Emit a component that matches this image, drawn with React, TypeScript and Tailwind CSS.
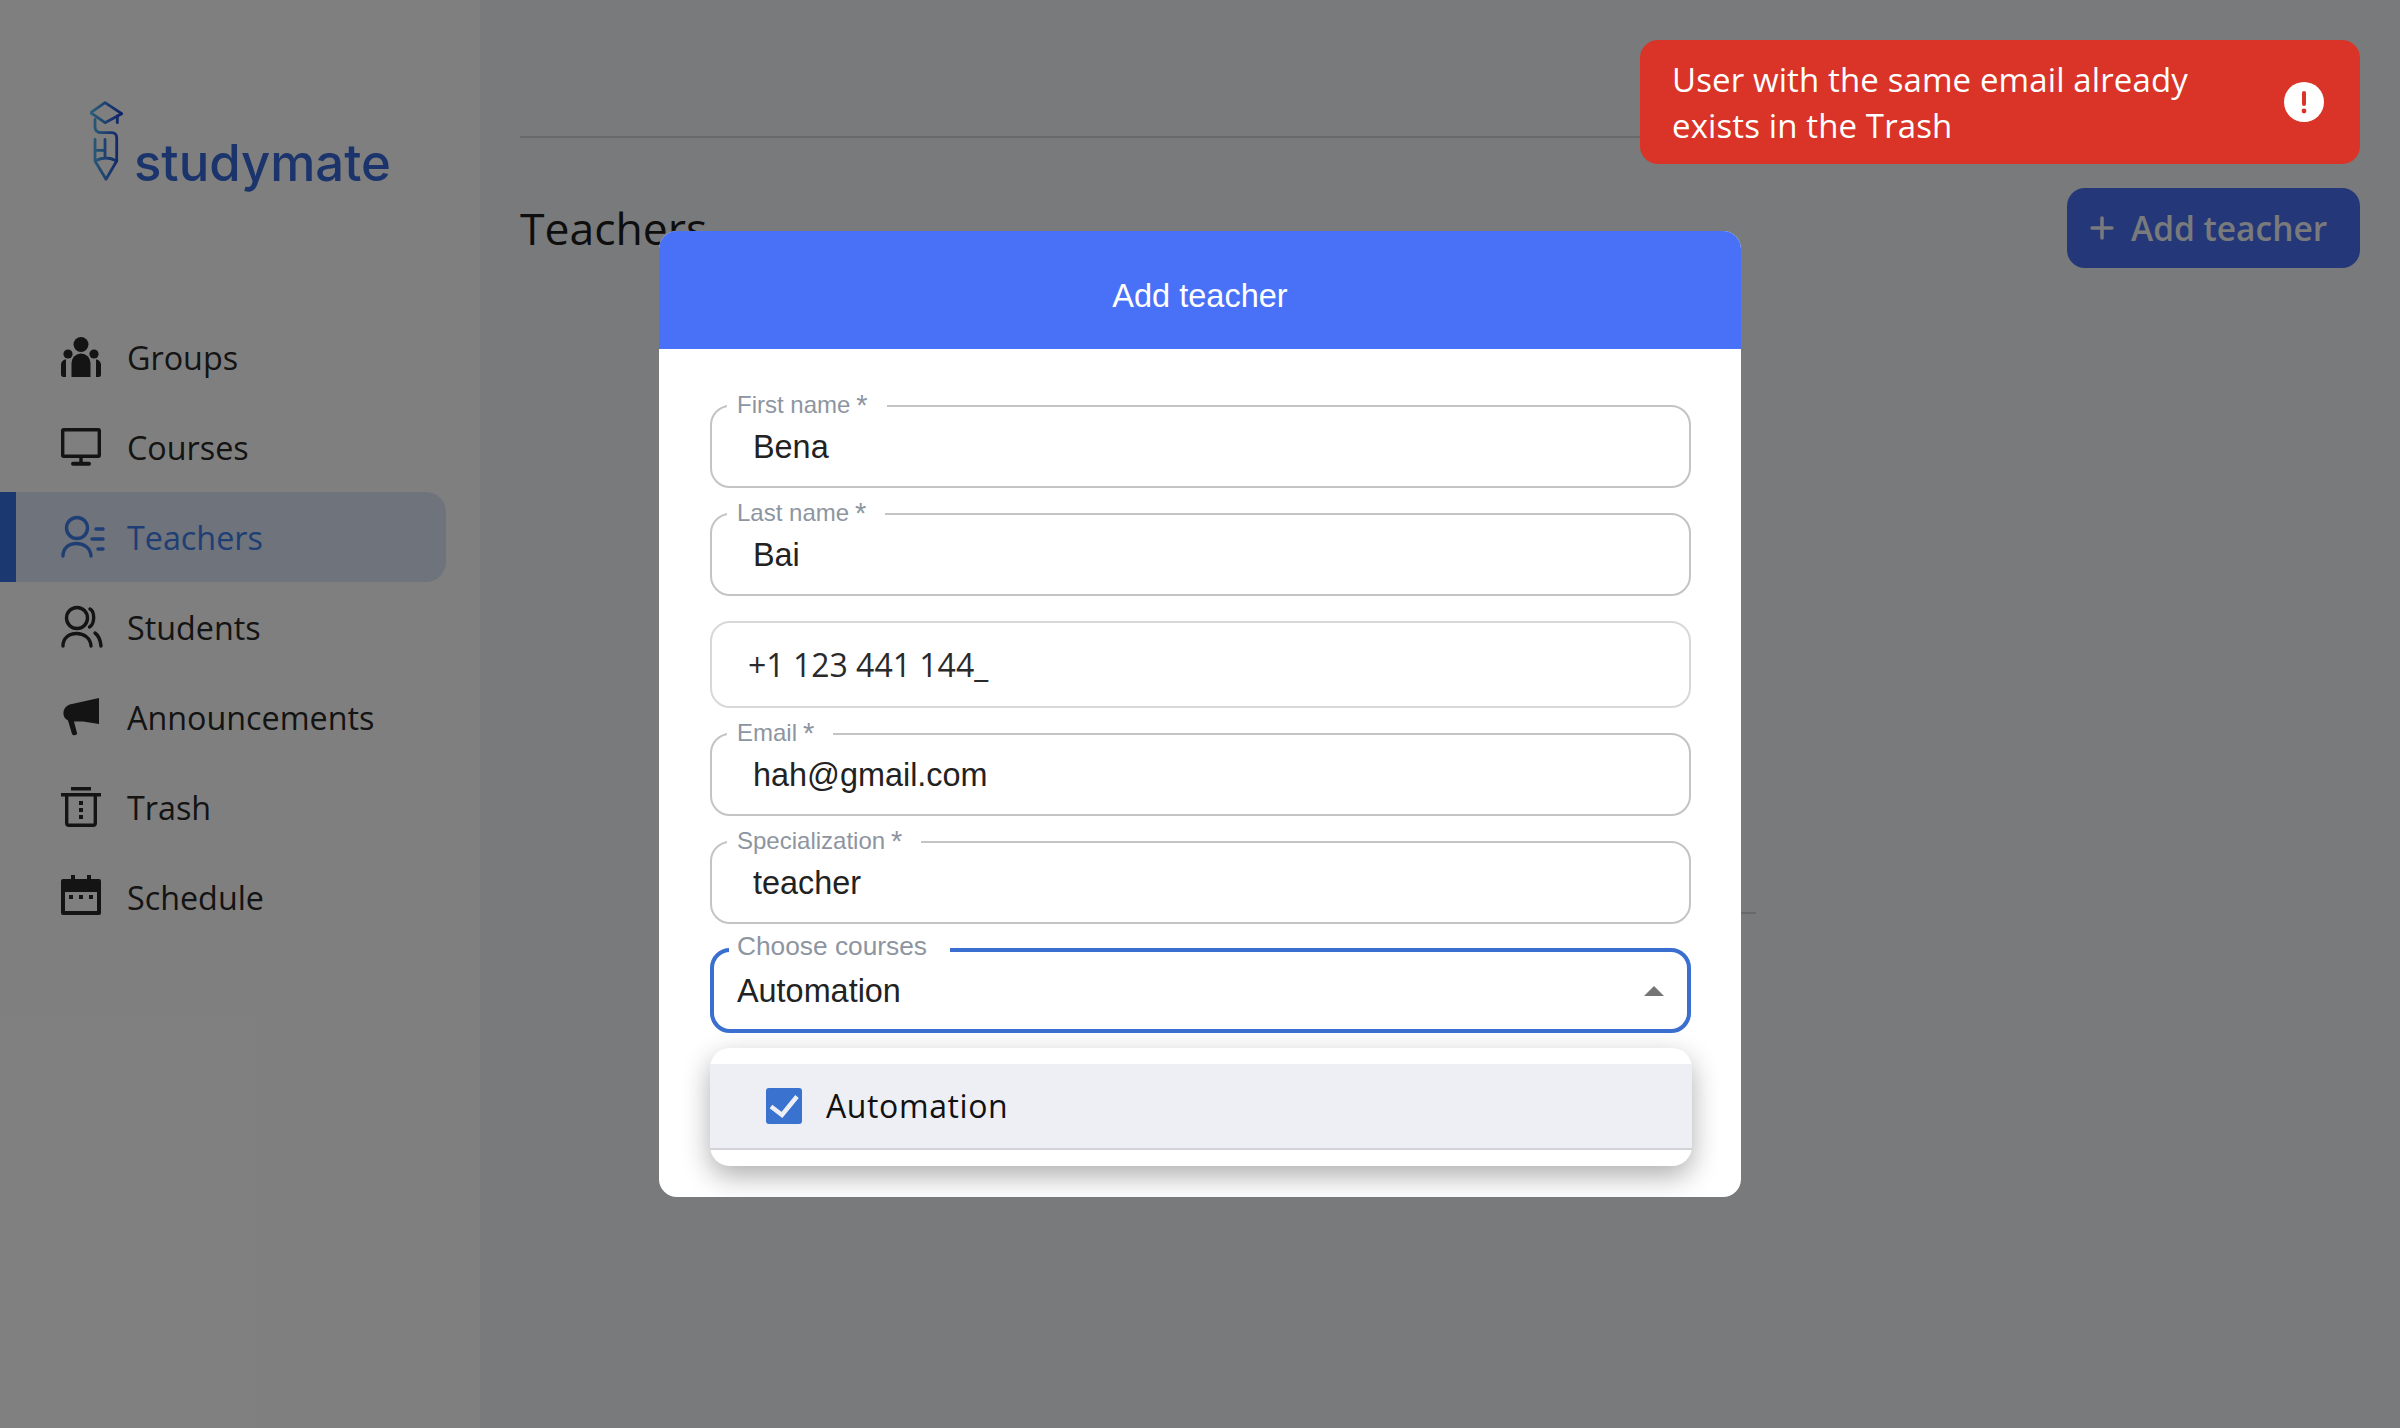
import type { ReactNode } from 'react'
import { Plus } from 'lucide-react'

const sans = 'font-["Open_Sans",sans-serif]'
const helv = 'font-["Liberation_Sans",sans-serif]'

function GroupsIcon() {
  return (
    <svg width="40" height="40" viewBox="0 0 40 40" fill="currentColor">
      <circle cx="20" cy="7.500" r="7.500" />
      <circle cx="7" cy="17" r="4.600" />
      <circle cx="33" cy="17" r="4.600" />
      <path d="M10.500 40V26a9.500 9.500 0 0 1 19 0v14z" />
      <path d="M0 37v-9c0-3 2-5.500 5-5.500v17.500H2.500A2.500 2.500 0 0 1 0 37z" />
      <path d="M40 37v-9c0-3-2-5.500-5-5.500v17.500h2.500a2.500 2.500 0 0 0 2.500-2.500z" />
    </svg>
  )
}

function CoursesIcon() {
  return (
    <svg width="40" height="38" viewBox="0 0 40 38" fill="none" stroke="currentColor" strokeWidth="3.400">
      <rect x="1.700" y="1.700" width="36.600" height="26.600" rx="1" />
      <path d="M20 29v6" />
      <path d="M12 35.800h16" strokeLinecap="round" strokeWidth="4" />
    </svg>
  )
}

function TeachersIcon() {
  return (
    <svg width="44" height="44" viewBox="0 0 44 44" fill="none" stroke="currentColor" strokeWidth="3.400" strokeLinecap="round">
      <circle cx="16" cy="13" r="10.500" />
      <path d="M2 41c0-8 6-12.500 13.500-12.500S29.500 33 30 41" />
      <path d="M35 14h7M31 24h11M37 34h5" />
    </svg>
  )
}

function StudentsIcon() {
  return (
    <svg width="42" height="44" viewBox="0 0 42 44" fill="none" stroke="currentColor" strokeWidth="3.400" strokeLinecap="round">
      <circle cx="16" cy="13" r="10.500" />
      <path d="M2 41c0-8 6-12.500 13.500-12.500S29.500 33 30 41" />
      <path d="M29 4c5 2.500 5 15-.5 18" />
      <path d="M34 28c3.500 2.500 5.500 7.500 6 13" />
    </svg>
  )
}

function AnnouncementsIcon() {
  return (
    <svg width="40" height="40" viewBox="0 0 40 40" fill="currentColor">
      <path d="M38 1v26l-16-2.500H13l3 11.500c.5 2.500-4 3-5 1L7 23.500C4 22 2 19 2.500 15 3 10.500 7 7.500 11 7z" />
    </svg>
  )
}

function TrashIcon() {
  return (
    <svg width="40" height="40" viewBox="0 0 40 40" fill="currentColor">
      <rect x="10" y="0" width="20" height="3.500" />
      <rect x="0" y="6" width="40" height="3.500" />
      <path fill="none" stroke="currentColor" strokeWidth="3.400" d="M5.700 9v27a2.300 2.300 0 0 0 2.300 2.300h24a2.300 2.300 0 0 0 2.300-2.300V9" />
      <rect x="18" y="14" width="4" height="4" />
      <rect x="18" y="21" width="4" height="4" />
      <rect x="18" y="28" width="4" height="4" />
    </svg>
  )
}

function ScheduleIcon() {
  return (
    <svg width="40" height="44" viewBox="0 0 40 44" fill="currentColor">
      <path fillRule="evenodd" d="M10 0h4v4h12V0h4v4h8a2 2 0 0 1 2 2v32a2 2 0 0 1-2 2H2a2 2 0 0 1-2-2V6a2 2 0 0 1 2-2h8zM4 17v19h32V17z" />
      <rect x="8" y="20" width="4" height="4" />
      <rect x="18" y="20" width="4" height="4" />
      <rect x="28" y="20" width="4" height="4" />
    </svg>
  )
}

function LogoMark() {
  return (
    <svg width="34" height="82" viewBox="0 0 34 82" fill="none" strokeWidth="2.800" strokeLinejoin="round" strokeLinecap="round">
      <defs>
        <linearGradient id="logoGrad" gradientUnits="userSpaceOnUse" x1="0" y1="0" x2="32" y2="0">
          <stop offset="0" stopColor="#58c0f0" />
          <stop offset="1" stopColor="#1c40d0" />
        </linearGradient>
      </defs>
      <g stroke="url(#logoGrad)">
        <path d="M15 1.700.7 11.700 15 21.700l16.700-9z" />
        <path d="M5 18.300V26c0 3.500 2.500 5.700 6.700 5.700h10c3 0 5 2 5 5V60" />
        <path d="M27.300 15v6.700" />
        <path d="M5 38.300V60l11 18.300L26.700 60M5 60q11-6 21.700 0M15 38.300V56M5 49.300h10" />
      </g>
    </svg>
  )
}

const navItems: { label: string; icon: ReactNode; active?: boolean }[] = [
  { label: 'Groups', icon: <GroupsIcon /> },
  { label: 'Courses', icon: <CoursesIcon /> },
  { label: 'Teachers', icon: <TeachersIcon />, active: true },
  { label: 'Students', icon: <StudentsIcon /> },
  { label: 'Announcements', icon: <AnnouncementsIcon /> },
  { label: 'Trash', icon: <TrashIcon /> },
  { label: 'Schedule', icon: <ScheduleIcon /> },
]

function Sidebar() {
  return (
    <aside className="w-[480px] shrink-0 bg-white">
      <div className="h-[312px] pl-[90px] pt-[101px]">
        <div className="flex items-end gap-[10px]">
          <LogoMark />
          <span className="-mb-[5px] font-['Inter',sans-serif] text-[50.800px] leading-[50px] font-medium text-[#3668d8]">studymate</span>
        </div>
      </div>
      <nav className="flex flex-col pr-[34px]">
        {navItems.map(item => (
          <div
            key={item.label}
            className={`flex h-[90px] items-center ${sans} text-[32.300px] font-medium ${item.active ? 'rounded-r-[20px] border-l-[16px] border-[#3673e0] bg-[#dce6f8] pl-[45px] text-[#3f7ce8]' : 'pl-[61px] text-[#282828]'}`}
          >
            <span className="flex w-[66px] shrink-0">{item.icon}</span>
            <span className="pt-[1px]">{item.label}</span>
          </div>
        ))}
      </nav>
    </aside>
  )
}

function Main() {
  return (
    <main className="flex-1 bg-[#f2f4f8] px-[40px]">
      <div className="h-[138px] border-b-2 border-[#d0d2d6]" />
      <div className="flex items-center justify-between pt-[50px]">
        <h1 className={`${sans} text-[44.500px] leading-[62px] font-medium text-[#1c1c1c]`}>Teachers</h1>
        <button className={`flex h-[80px] w-[293px] items-center gap-[12px] rounded-[18px] bg-[#486ff0] pl-[18px] text-[33.500px] font-semibold text-[#f2f4f8] ${sans}`}>
          <Plus size={34} strokeWidth={2.500} />
          Add teacher
        </button>
      </div>
      {/* only the stub right of the modal shows */}
      <div className="ml-[400px] h-[646px] w-[836px] border-b-2 border-[#d0d2d6]" />
    </main>
  )
}

function Field({ label, value }: { label: string; value: string }) {
  return (
    <div className={`relative flex h-[83px] items-center rounded-[20px] border-2 border-[#c4c4c4] pl-[41px] pt-[2px] ${helv}`}>
      <span className="absolute -top-[16px] left-[15px] flex items-start bg-white pl-[10px] pr-[19px] text-[24px] leading-[28px] text-[#8d95a1]">
        {label}
        <span className="ml-[6px] text-[29px] leading-[28px]">*</span>
      </span>
      <span className="text-[32.400px] text-[#222]">{value}</span>
    </div>
  )
}

function PhoneField({ value }: { value: string }) {
  return (
    <div className={`flex h-[87px] items-center rounded-[20px] border-2 border-[#d8d8d8] pl-[36px] ${sans}`}>
      <span className="text-[32px] text-[#2a2a2a]">{value}</span>
    </div>
  )
}

function CoursesSelect() {
  return (
    <div className={`relative flex h-[85px] items-center justify-between rounded-[20px] border-[4px] border-[#3a6fd0] pl-[23px] pr-[23px] ${helv}`}>
      <span className="absolute -top-[21px] left-[15px] bg-white pl-[8px] pr-[23px] text-[26.300px] leading-[30px] text-[#8d95a1]">Choose courses</span>
      <span className="pt-[1px] text-[32.400px] text-[#222]">Automation</span>
      <span className="h-0 w-0 border-x-[10px] border-b-[10px] border-x-transparent border-b-[#757575]" />
    </div>
  )
}

function CourseMenu() {
  return (
    <div className="mr-[-1px] mt-[15px] rounded-[20px] bg-white py-[16px] shadow-[0_10px_28px_rgba(0,0,0,0.32)]">
      <div className={`flex h-[86px] items-center gap-[24px] border-b-2 border-[#d3d3d9] bg-[#eeeff4] pl-[56px] ${sans}`}>
        <span className="flex h-[36px] w-[36px] rounded-[3px] bg-[#3a72d0]">
          <svg width="36" height="36" viewBox="0 0 36 36" fill="none" stroke="#eeeff4" strokeWidth="4.500">
            <path d="M5 18.500l11 8.500 15-18.500" />
          </svg>
        </span>
        <span className="text-[32px] tracking-[0.6px] text-[#111]">Automation</span>
      </div>
    </div>
  )
}

function AddTeacherModal() {
  return (
    <div className="absolute left-[659px] top-[231px] h-[966px] w-[1082px] overflow-hidden rounded-[18px] bg-white">
      <div className={`flex h-[118px] items-center justify-center bg-[#4871f7] pt-[12px] text-[32.500px] text-white ${helv}`}>Add teacher</div>
      <div className="flex flex-col gap-[25px] pl-[51px] pr-[50px] pt-[56px]">
        <Field label="First name" value="Bena" />
        <Field label="Last name" value="Bai" />
        <PhoneField value="+1 123 441 144_" />
        <Field label="Email" value="hah@gmail.com" />
        <Field label="Specialization" value="teacher" />
        <div className="-mt-[1px]">
          <CoursesSelect />
          <CourseMenu />
        </div>
      </div>
    </div>
  )
}

function ErrorToast() {
  return (
    <div className={`absolute left-[1640px] top-[40px] flex h-[124px] w-[720px] items-center justify-between rounded-[18px] bg-[#d93427] pl-[32px] pr-[36px] text-white ${sans}`}>
      <p className="w-[560px] pt-[2px] text-[33px] leading-[46px] tracking-[0.12px]">User with the same email already exists in the Trash</p>
      <svg width="40" height="40" viewBox="0 0 40 40">
        <circle cx="20" cy="20" r="20" fill="#fff" />
        <rect x="18" y="9" width="4" height="15" rx="2" fill="#d93427" />
        <circle cx="20" cy="29" r="2.400" fill="#d93427" />
      </svg>
    </div>
  )
}

export default function App() {
  return (
    <div className="relative flex h-[1428px] w-[2400px] overflow-hidden">
      <Sidebar />
      <Main />
      <div className="absolute inset-0 bg-black/50" />
      <AddTeacherModal />
      <ErrorToast />
    </div>
  )
}
